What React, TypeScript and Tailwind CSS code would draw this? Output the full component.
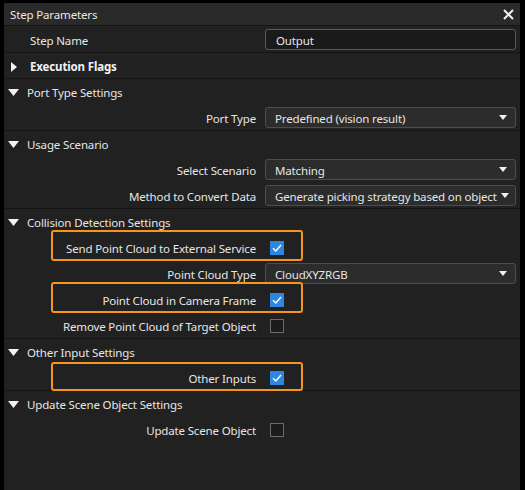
import React from "react";

const font = { fontFamily: '"Noto Sans", "Open Sans", sans-serif' };

function Caret() {
  return (
    <svg width="8" height="5" viewBox="0 0 8 5" className="shrink-0 ml-[4px]">
      <path d="M0 0 L8 0 L4 5 Z" fill="#f0f0f0" />
    </svg>
  );
}

function SectionHeader({ title, open = true, bold = false }: { title: string; open?: boolean; bold?: boolean }) {
  return (
    <div className="h-[26px] border-t border-[#141414] flex items-center pt-[2px]">
      {open ? (
        <svg width="11" height="7" viewBox="0 0 11 7" className="ml-[4px] mr-[8px] shrink-0">
          <path d="M0 0 L11 0 L5.5 7 Z" fill="#f2f2f2" />
        </svg>
      ) : (
        <svg width="6" height="10" viewBox="0 0 6 10" className="ml-[7px] mr-[13px] shrink-0">
          <path d="M0 0 L6 5 L0 10 Z" fill="#f2f2f2" />
        </svg>
      )}
      <span className={bold ? "font-bold text-[#f2f2f2]" : "text-[#e6e6e6]"}>{title}</span>
    </div>
  );
}

function Row({ label, children, highlight }: { label: string; children?: React.ReactNode; highlight?: { top: number; bottom: number } }) {
  return (
    <div className="relative h-[26px] flex items-center">
      <div className="w-[252px] text-right text-[#e6e6e6] whitespace-nowrap pt-[3px]">{label}</div>
      <div className="ml-[9px] w-[251px] flex items-center pt-[1px]">{children}</div>
      {highlight && (
        <div
          className="absolute left-[47px] w-[252px] border-2 border-[#f7941d] rounded-[3px] pointer-events-none"
          style={{ top: highlight.top, bottom: highlight.bottom }}
        />
      )}
    </div>
  );
}

function Select({ value }: { value: string }) {
  return (
    <div className="w-full h-[21px] rounded-[3px] border border-[#4e4e4e] bg-[#2c2c2c] flex items-center pl-[9px] pr-[8px] justify-between text-[#e6e6e6]">
      <span className="whitespace-nowrap pt-[2px]">{value}</span>
      <Caret />
    </div>
  );
}

function Check({ checked }: { checked: boolean }) {
  return checked ? (
    <div className="ml-[5px] w-[14px] h-[14px] bg-[#2d86e0] flex items-center justify-center">
      <svg width="10" height="8" viewBox="0 0 10 8">
        <path d="M1 4.2 L3.8 7 L9 1" stroke="#ffffff" strokeWidth="1.4" fill="none" />
      </svg>
    </div>
  ) : (
    <div className="ml-[5px] w-[14px] h-[14px] border border-[#6a6a6a] bg-[#1c1c1c]" />
  );
}

export default function App() {
  return (
    <div className="w-[525px] h-[490px] bg-black pt-[3px] pl-[4px] pr-[5px] overflow-hidden text-[11.5px] tracking-[-0.15px]" style={font}>
      <div className="h-full bg-[#212121] flex flex-col">
        <div className="h-[23px] bg-[#2a2a2a] border-b border-[#141414] flex items-center justify-between pl-[6px] pr-[6px] shrink-0">
          <span className="text-[#e8e8e8] pt-[1px]">Step Parameters</span>
          <svg width="11" height="11" viewBox="0 0 11 11">
            <path d="M1 1 L10 10 M10 1 L1 10" stroke="#f0f0f0" strokeWidth="2" />
          </svg>
        </div>
        <div className="h-[26px] flex items-center">
          <div className="w-[252px] pl-[26px] text-[#e6e6e6] pt-[3px]">Step Name</div>
          <div className="ml-[9px] w-[251px] pt-[1px]">
            <div className="w-full h-[21px] rounded-[3px] border border-[#5a5a5a] bg-[#1a1a1a] flex items-center pl-[10px] text-[#e6e6e6]">
              <span className="pt-[2px]">Output</span>
            </div>
          </div>
        </div>
        <SectionHeader title="Execution Flags" open={false} bold />
        <SectionHeader title="Port Type Settings" />
        <Row label="Port Type">
          <Select value="Predefined (vision result)" />
        </Row>
        <SectionHeader title="Usage Scenario" />
        <Row label="Select Scenario">
          <Select value="Matching" />
        </Row>
        <Row label="Method to Convert Data">
          <Select value="Generate picking strategy based on object" />
        </Row>
        <SectionHeader title="Collision Detection Settings" />
        <Row label="Send Point Cloud to External Service" highlight={{ top: -4, bottom: -1 }}>
          <Check checked />
        </Row>
        <Row label="Point Cloud Type">
          <Select value="CloudXYZRGB" />
        </Row>
        <Row label="Point Cloud in Camera Frame" highlight={{ top: -4, bottom: -1 }}>
          <Check checked />
        </Row>
        <Row label="Remove Point Cloud of Target Object">
          <Check checked={false} />
        </Row>
        <SectionHeader title="Other Input Settings" />
        <Row label="Other Inputs" highlight={{ top: -2, bottom: -1 }}>
          <Check checked />
        </Row>
        <SectionHeader title="Update Scene Object Settings" />
        <Row label="Update Scene Object">
          <Check checked={false} />
        </Row>
      </div>
    </div>
  );
}
